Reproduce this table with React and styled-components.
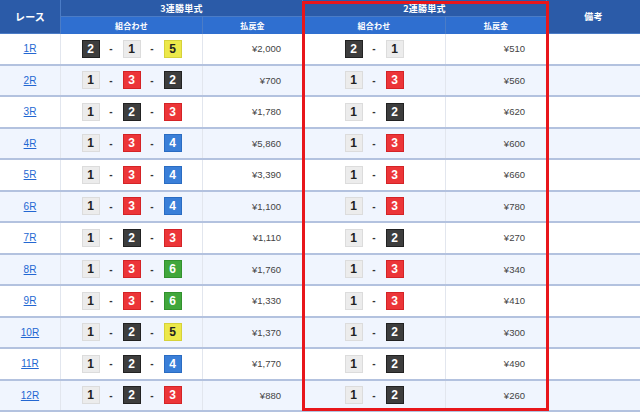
import React from 'react';
import styled, { createGlobalStyle } from 'styled-components';

const GlobalStyle = createGlobalStyle`
  html, body {
    margin: 0;
    padding: 0;
    background: #ffffff;
  }
  body {
    font-family: "Noto Sans CJK JP", "Liberation Sans", sans-serif;
  }
`;

const COLS = '61px 142px 100px 143px 101px 93px';

const races = [
  { no: '1R', tri: [2, 1, 5], triPay: '¥2,000', exa: [2, 1], exaPay: '¥510' },
  { no: '2R', tri: [1, 3, 2], triPay: '¥700', exa: [1, 3], exaPay: '¥560' },
  { no: '3R', tri: [1, 2, 3], triPay: '¥1,780', exa: [1, 2], exaPay: '¥620' },
  { no: '4R', tri: [1, 3, 4], triPay: '¥5,860', exa: [1, 3], exaPay: '¥600' },
  { no: '5R', tri: [1, 3, 4], triPay: '¥3,390', exa: [1, 3], exaPay: '¥660' },
  { no: '6R', tri: [1, 3, 4], triPay: '¥1,100', exa: [1, 3], exaPay: '¥780' },
  { no: '7R', tri: [1, 2, 3], triPay: '¥1,110', exa: [1, 2], exaPay: '¥270' },
  { no: '8R', tri: [1, 3, 6], triPay: '¥1,760', exa: [1, 3], exaPay: '¥340' },
  { no: '9R', tri: [1, 3, 6], triPay: '¥1,330', exa: [1, 3], exaPay: '¥410' },
  { no: '10R', tri: [1, 2, 5], triPay: '¥1,370', exa: [1, 2], exaPay: '¥300' },
  { no: '11R', tri: [1, 2, 4], triPay: '¥1,770', exa: [1, 2], exaPay: '¥490' },
  { no: '12R', tri: [1, 2, 3], triPay: '¥880', exa: [1, 2], exaPay: '¥260' },
];

const boatColors = {
  1: { bg: '#ececec', border: '#dcdcdc', fg: '#222' },
  2: { bg: '#3d3d3d', border: '#222', fg: '#fff' },
  3: { bg: '#ec3538', border: '#d42326', fg: '#fff' },
  4: { bg: '#3a7fd8', border: '#2a6cc2', fg: '#fff' },
  5: { bg: '#ece84a', border: '#d6d23a', fg: '#222' },
  6: { bg: '#41a73c', border: '#32912e', fg: '#fff' },
};

const Wrapper = styled.div`
  position: relative;
  width: 640px;
  overflow: hidden;
`;

const Header = styled.div`
  display: grid;
  grid-template-columns: ${COLS};
  grid-template-rows: 17px 17px;
  background: #2b5ba8;
  border-bottom: 1px solid #22509a;
  box-sizing: border-box;
  height: 34px;
`;

const HeadCell = styled.div`
  grid-column: ${(p) => p.col};
  grid-row: ${(p) => p.row};
  display: flex;
  align-items: center;
  justify-content: center;
  color: #fff;
  font-weight: 700;
  font-size: ${(p) => p.size || 9}px;
  background: ${(p) => (p.sub ? '#2f6fd0' : '#2b5ba8')};
  border-right: 1px solid #4b7cc6;
  border-bottom: ${(p) => (p.sub ? 'none' : '1px solid #4b7cc6')};
  box-sizing: border-box;
  letter-spacing: 0.2px;
  &:last-child {
    border-right: none;
  }
`;

const Row = styled.div`
  display: grid;
  grid-template-columns: ${COLS};
  height: 31.5px;
  box-sizing: border-box;
  background: ${(p) => (p.alt ? '#f0f5fe' : '#ffffff')};
  border-bottom: 2px solid #b3c2df;
`;

const Cell = styled.div`
  display: flex;
  align-items: center;
  justify-content: ${(p) => p.align || 'center'};
  padding-right: ${(p) => (p.align === 'flex-end' ? '21px' : '0')};
  border-right: 1px solid #e2e6ee;
  box-sizing: border-box;
  &:last-child {
    border-right: none;
  }
`;

const RaceLink = styled.a`
  color: #2367d2;
  font-size: 10px;
  text-decoration: underline;
  font-family: "Liberation Sans", "Noto Sans CJK JP", sans-serif;
`;

const Combo = styled.div`
  display: flex;
  align-items: center;
  gap: 0;
`;

const Boat = styled.span`
  width: 18px;
  height: 18px;
  box-sizing: border-box;
  display: flex;
  align-items: center;
  justify-content: center;
  background: ${(p) => boatColors[p.n].bg};
  border: 1px solid ${(p) => boatColors[p.n].border};
  color: ${(p) => boatColors[p.n].fg};
  font-family: "Liberation Sans", sans-serif;
  font-weight: 700;
  font-size: 12px;
`;

const Dash = styled.span`
  width: 23px;
  text-align: center;
  font-size: 10px;
  color: #333;
  font-family: "Liberation Sans", sans-serif;
  font-weight: 700;
`;

const Pay = styled.span`
  font-size: 9.5px;
  color: #444;
  font-family: "Liberation Sans", "Noto Sans CJK JP", sans-serif;
`;

const Highlight = styled.div`
  position: absolute;
  left: 302px;
  top: 1px;
  width: 247px;
  height: 410px;
  border: 3px solid #e8161b;
  box-sizing: border-box;
  pointer-events: none;
`;

function BoatCombo({ nums }) {
  return (
    <Combo>
      {nums.map((n, i) => (
        <React.Fragment key={i}>
          {i > 0 && <Dash>-</Dash>}
          <Boat n={n}>{n}</Boat>
        </React.Fragment>
      ))}
    </Combo>
  );
}

function App() {
  return (
    <Wrapper>
      <GlobalStyle />
      <Header>
        <HeadCell col="1" row="1 / 3" size={10}>レース</HeadCell>
        <HeadCell col="2 / 4" row="1">3連勝単式</HeadCell>
        <HeadCell col="2" row="2" sub size={8}>組合わせ</HeadCell>
        <HeadCell col="3" row="2" sub size={8}>払戻金</HeadCell>
        <HeadCell col="4 / 6" row="1">2連勝単式</HeadCell>
        <HeadCell col="4" row="2" sub size={8}>組合わせ</HeadCell>
        <HeadCell col="5" row="2" sub size={8}>払戻金</HeadCell>
        <HeadCell col="6" row="1 / 3">備考</HeadCell>
      </Header>
      {races.map((r, i) => (
        <Row key={r.no} alt={i % 2 === 1}>
          <Cell>
            <RaceLink href="#">{r.no}</RaceLink>
          </Cell>
          <Cell>
            <BoatCombo nums={r.tri} />
          </Cell>
          <Cell align="flex-end">
            <Pay>{r.triPay}</Pay>
          </Cell>
          <Cell>
            <BoatCombo nums={r.exa} />
          </Cell>
          <Cell align="flex-end">
            <Pay>{r.exaPay}</Pay>
          </Cell>
          <Cell />
        </Row>
      ))}
      <Highlight />
    </Wrapper>
  );
}

export default App;
